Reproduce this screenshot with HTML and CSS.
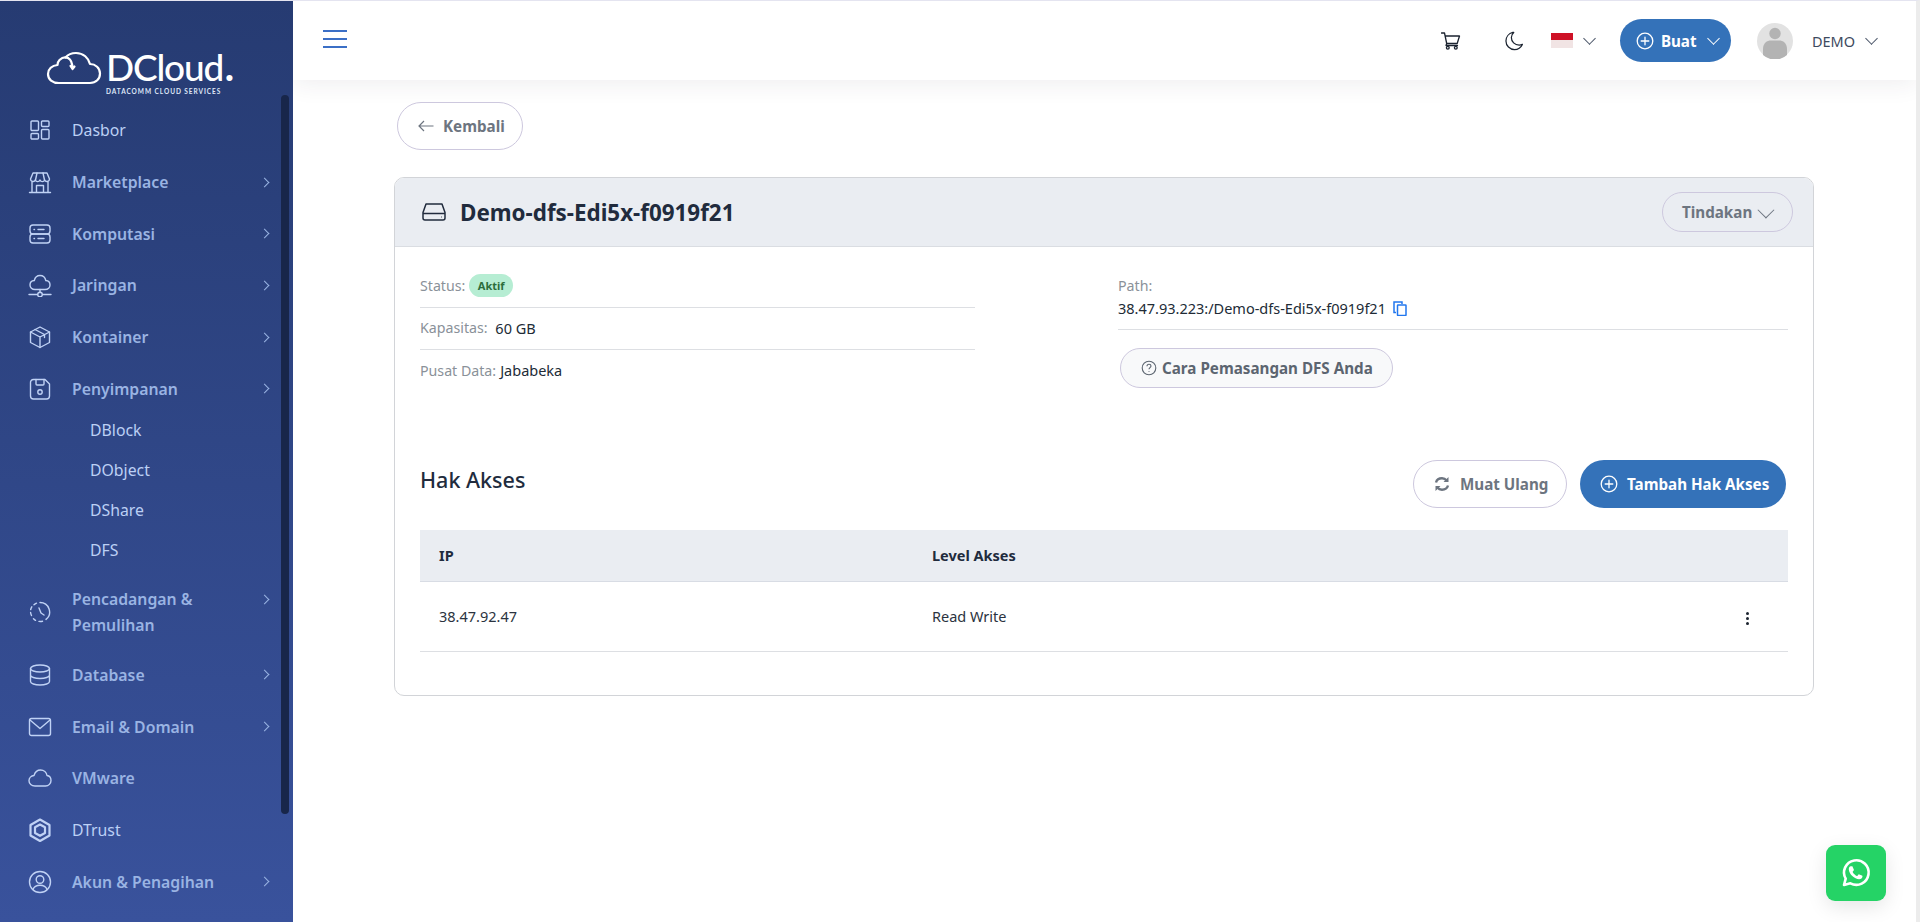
FILE: index.html
```html
<!DOCTYPE html>
<html lang="en">
<head>
    <meta charset="UTF-8">
    <title>DCloud - Demo-dfs-Edi5x-f0919f21</title>
    <link rel="stylesheet" href="styles.css">
</head>
<body>
<div class="app">
    <aside class="sidebar">
        <div class="logo">
            <svg class="logo-cloud" viewBox="0 0 56 34" fill="none" stroke="#fff" stroke-width="2.2" stroke-linecap="round" stroke-linejoin="round">
                <path d="M13 32h31c6 0 10-4 10-9.500 0-5.500-4.500-9.500-10-9.500-1.500-6-6.500-11-14-11-4.500 0-8 1.500-10.500 4.500"/>
                <path d="M22 7c-3-1.500-6-.5-8.500 2-1.500 1.500-2 3.500-2 5C6 14.500 2 18 2 23c0 5.500 4.500 9 11 9"/>
                <path d="M22 7c3 1.500 4.500 5 4.500 11M26.500 18l-2-3M26.500 18l2-2.500"/>
            </svg>
            <div class="logo-text">
                <div class="logo-name">DCloud<span class="logo-dot">.</span></div>
                <div class="logo-sub">DATACOMM CLOUD SERVICES</div>
            </div>
        </div>

        <nav class="menu">
            <a class="menu-item plain">
                <svg class="menu-icon" viewBox="0 0 24 24"><rect x="3" y="3" width="7.500" height="9.500" rx="1"/><rect x="13.500" y="3" width="7.500" height="5.500" rx="1"/><rect x="3" y="15.500" width="7.500" height="5.500" rx="1"/><rect x="13.500" y="11.500" width="7.500" height="9.500" rx="1"/></svg>
                <span class="menu-label">Dasbor</span>
            </a>
            <a class="menu-item">
                <svg class="menu-icon" viewBox="0 0 24 24"><path d="M5 3h14l2.500 6a2.500 2.500 0 0 1-4.800 1 2.500 2.500 0 0 1-4.700 0 2.500 2.500 0 0 1-4.700 0 2.500 2.500 0 0 1-4.800-1z"/><path d="M9 3 7.500 10M15 3l1.500 7M4 12v10M20 12v10M1.500 22.500h21M8.500 22v-6.500h7V22"/></svg>
                <span class="menu-label">Marketplace</span>
                <span class="chev"></span>
            </a>
            <a class="menu-item">
                <svg class="menu-icon" viewBox="0 0 24 24"><rect x="2" y="3" width="20" height="9" rx="3"/><rect x="2" y="12" width="20" height="9" rx="3"/><path d="M6 7.500h.5M10 7.500h6M6 16.500h.5M10 16.500h6"/></svg>
                <span class="menu-label">Komputasi</span>
                <span class="chev"></span>
            </a>
            <a class="menu-item">
                <svg class="menu-icon" viewBox="0 0 24 24"><path d="M7 16.500c-3 0-5-2-5-4.500 0-2.500 2-4.300 4.300-4.500C7 4.500 9.300 2.500 12 2.500c3 0 5.200 2 5.800 5 2.500.2 4.200 2 4.200 4.500s-2 4.500-5 4.500z"/><path d="M12 16.500v3M1 21.500h8.500M14.500 21.500H23"/><circle cx="12" cy="21.500" r="2.300"/></svg>
                <span class="menu-label">Jaringan</span>
                <span class="chev"></span>
            </a>
            <a class="menu-item">
                <svg class="menu-icon" viewBox="0 0 24 24"><path d="M12 2 21.500 7v10.500L12 22.500 2.500 17.500V7z"/><path d="M2.500 7 12 12l9.500-5M12 12v10.500M7 4.500 16.500 9.500v3"/></svg>
                <span class="menu-label">Kontainer</span>
                <span class="chev"></span>
            </a>
            <a class="menu-item">
                <svg class="menu-icon" viewBox="0 0 24 24"><path d="M5.500 2.500h11.500l4.500 4.500v12a3 3 0 0 1-3 3h-13a3 3 0 0 1-3-3v-13a3 3 0 0 1 3-3.500z"/><path d="M8 2.500V7a1 1 0 0 0 1 1h6a1 1 0 0 0 1-1V2.500"/><circle cx="12" cy="15" r="2.200"/></svg>
                <span class="menu-label">Penyimpanan</span>
                <span class="chev"></span>
            </a>
            <div class="submenu">
                <a class="sub-item">DBlock</a>
                <a class="sub-item">DObject</a>
                <a class="sub-item">DShare</a>
                <a class="sub-item">DFS</a>
            </div>
            <a class="menu-item tall">
                <svg class="menu-icon" viewBox="0 0 24 24"><path d="M12 2.500a9.500 9.500 0 0 1 6 16.900M14.500 21.200a9.500 9.500 0 0 1-3.500.2M7.500 20.300a9.500 9.500 0 0 1-2-1.500M3.500 15.500a9.500 9.500 0 0 1-.9-3M2.700 9.500c.2-1 .6-1.900 1.100-2.700M6 4.800a9.500 9.500 0 0 1 2.500-1.600"/><path d="M11 8l2 5 3 2"/></svg>
                <span class="menu-label">Pencadangan &amp;<br>Pemulihan</span>
                <span class="chev"></span>
            </a>
            <a class="menu-item">
                <svg class="menu-icon" viewBox="0 0 24 24"><ellipse cx="12" cy="5.500" rx="9.500" ry="3.500"/><path d="M2.500 5.500v13c0 2 4.300 3.500 9.500 3.500s9.500-1.500 9.500-3.500v-13M2.500 12c0 2 4.300 3.500 9.500 3.500s9.500-1.500 9.500-3.500"/></svg>
                <span class="menu-label">Database</span>
                <span class="chev"></span>
            </a>
            <a class="menu-item">
                <svg class="menu-icon" viewBox="0 0 24 24"><rect x="1.500" y="3.500" width="21" height="17" rx="2"/><path d="m2 5 10 8.500L22 5"/></svg>
                <span class="menu-label">Email &amp; Domain</span>
                <span class="chev"></span>
            </a>
            <a class="menu-item">
                <svg class="menu-icon" viewBox="0 0 24 24"><path d="M7 20c-3.500 0-6-2.300-6-5.300 0-2.800 2.200-5 5-5.200C7 6.300 9.500 4 12.500 4c3.400 0 6 2.400 6.500 5.500 2.400.3 4 2.400 4 5 0 3-2.300 5.500-5.500 5.500z"/></svg>
                <span class="menu-label">VMware</span>
            </a>
            <a class="menu-item plain">
                <svg class="menu-icon thick" viewBox="0 0 24 24"><path d="M12 1.500 21.500 7v10.500L12 23 2.500 17.500V7z"/><path d="M12 6.500l5 2.800v5.700l-5 2.800-5-2.800V9.300z"/></svg>
                <span class="menu-label">DTrust</span>
            </a>
            <a class="menu-item">
                <svg class="menu-icon" viewBox="0 0 24 24"><circle cx="12" cy="12" r="10.500"/><circle cx="12" cy="9.500" r="3.800"/><path d="M5 19.500c1-3 3.500-4.200 7-4.200s6 1.200 7 4.200"/></svg>
                <span class="menu-label">Akun &amp; Penagihan</span>
                <span class="chev"></span>
            </a>
        </nav>
        <div class="side-thumb"></div>
    </aside>

    <div class="main">
        <header class="topbar">
            <svg class="burger" viewBox="0 0 24 18"><path d="M0 1h24M0 9h24M0 17h24"/></svg>
            <div class="top-right">
                <svg class="top-icon cart" viewBox="0 0 20 18"><path d="M.5 1h3l2.200 10.500h10.500L18.500 4H4.300"/><path d="M5.700 11.500 5 13.500h11.500"/><circle cx="6.800" cy="15.800" r="1.400"/><circle cx="14.800" cy="15.800" r="1.400"/></svg>
                <svg class="top-icon moon" viewBox="0 0 20 20"><path d="M8.200 1C4 2 1 5.600 1 10c0 5 4 9 9 9 3.700 0 6.800-2.200 8.300-5.400-1 .5-2.200.8-3.400.8-4.600 0-8.200-3.700-8.200-8.200 0-1.900.9-3.800 2.500-5.200z"/></svg>
                <div class="flag"></div>
                <span class="caret dark flag-caret"></span>
                <button class="btn btn-primary btn-buat">
                    <svg class="plus-icon" viewBox="0 0 18 18"><circle cx="9" cy="9" r="7.800"/><path d="M9 5.200v7.600M5.200 9h7.600"/></svg>
                    Buat
                    <span class="caret white"></span>
                </button>
                <div class="avatar">
                    <svg viewBox="0 0 36 36"><circle cx="18" cy="18" r="18" fill="#e2e2e2"/><circle cx="18" cy="10.500" r="5.700" fill="#b3b3b3"/><path d="M6 32v-6c0-6 4-8.500 8-8.500h8c4 0 8 2.500 8 8.500v6a18 18 0 0 1-24 0z" fill="#b3b3b3"/></svg>
                </div>
                <span class="user-name">DEMO</span>
                <span class="caret dark"></span>
            </div>
        </header>

        <main class="content">
            <button class="btn btn-outline back-btn">
                <svg class="arrow-left" viewBox="0 0 16 12"><path d="M15.500 6H1M6 1 1 6l5 5"/></svg>
                Kembali
            </button>

            <section class="card">
                <div class="card-head">
                    <div class="card-title">
                        <svg class="drive-icon" viewBox="0 0 24 18"><path d="M4 1h16l3 8.500V15a2 2 0 0 1-2 2H3a2 2 0 0 1-2-2V9.500z"/><path d="M1 10.500h22M19.500 14h.5"/></svg>
                        <h1>Demo-dfs-Edi5x-f0919f21</h1>
                    </div>
                    <button class="btn btn-outline action-btn">Tindakan <span class="caret grey"></span></button>
                </div>

                <div class="card-body">
                    <div class="details">
                        <div class="detail-list">
                            <div class="detail-row"><span class="muted">Status:</span> <span class="badge">Aktif</span></div>
                            <div class="detail-row"><span class="muted">Kapasitas:</span>&nbsp;60 GB</div>
                            <div class="detail-row last"><span class="muted">Pusat Data:</span> Jababeka</div>
                        </div>
                        <div class="path-col">
                            <div class="path-box">
                                <div class="muted path-label">Path:</div>
                                <div class="path-value">38.47.93.223:/Demo-dfs-Edi5x-f0919f21
                                    <svg class="copy-icon" viewBox="0 0 14 15"><path d="M3 1h-2v10.500h2"/><path d="M3 1h6v2"/><rect x="4.500" y="4" width="8.500" height="10.500" rx=".5"/></svg>
                                </div>
                            </div>
                            <button class="btn guide-btn">
                                <svg class="help-icon" viewBox="0 0 16 16"><circle cx="8" cy="8" r="6.800"/><path d="M6 6.300C6 5 7 4.300 8 4.300c1.200 0 2 .8 2 1.800 0 1.500-2 1.700-2 3.200M8 11.300v.6"/></svg>
                                Cara Pemasangan DFS Anda
                            </button>
                        </div>
                    </div>

                    <div class="section-head">
                        <h2>Hak Akses</h2>
                        <div class="section-actions">
                            <button class="btn btn-outline reload-btn">
                                <svg class="reload-icon" viewBox="0 0 16 16"><path d="M2 6.500C2.700 4 5 2.300 8 2.300c2 0 3.500.8 4.700 2.200M14 9.500c-.7 2.500-3 4.200-6 4.200-2 0-3.500-.8-4.700-2.200"/><path class="fill" d="M14.500 1v5h-5zM1.500 15v-5h5z"/></svg>
                                Muat Ulang
                            </button>
                            <button class="btn btn-primary add-btn">
                                <svg class="plus-icon" viewBox="0 0 18 18"><circle cx="9" cy="9" r="7.800"/><path d="M9 5.200v7.600M5.200 9h7.600"/></svg>
                                Tambah Hak Akses
                            </button>
                        </div>
                    </div>

                    <table class="access-table">
                        <thead>
                            <tr><th class="col-ip">IP</th><th>Level Akses</th><th class="col-menu"></th></tr>
                        </thead>
                        <tbody>
                            <tr>
                                <td>38.47.92.47</td>
                                <td>Read Write</td>
                                <td class="col-menu"><span class="dots"><i></i><i></i><i></i></span></td>
                            </tr>
                        </tbody>
                    </table>
                </div>
            </section>
        </main>
    </div>
</div>

<a class="wa-btn">
    <svg viewBox="0 0 32 32"><path fill="none" stroke="#fff" stroke-width="2.600" stroke-linejoin="round" d="M4 28l1.700-6.300A12.300 12.300 0 1 1 10.400 26.300z"/><path fill="#fff" d="M11.700 9.300c.4 0 .8 0 1 .6l1.100 2.700c.1.300.1.500-.1.800l-.9 1.100c-.2.200-.2.500 0 .8.900 1.600 2.200 2.800 3.900 3.600.3.100.6.100.8-.1l1-1.200c.3-.3.500-.3.800-.2l2.600 1.200c.4.200.6.400.6.700 0 1.800-1.600 3-3.400 3-4.600-.2-9.900-5-10.300-9.800-.1-1.500.7-3.100 2-3.200z"/></svg>
</a>
</body>
</html>
```
FILE: styles.css
```css
* {
    box-sizing: border-box;
}

body {
    margin: 0;
    height: 922px;
    overflow: hidden;
    font-family: "Noto Sans", Arial, sans-serif;
    font-size: 14.500px;
    color: #212b36;
    background: #fff;
    border-top: 1px solid #e4e4f0;
    border-right: 4px solid #ececec;
}

.app {
    display: flex;
    height: 921px;
}

/* sidebar */
.sidebar {
    position: relative;
    flex: 0 0 293px;
    background: linear-gradient(180deg, #263b72 0%, #39529c 100%);
    overflow: hidden;
}

.logo {
    height: 103.500px;
    padding: 50px 0 0 46px;
    display: flex;
    gap: 4px;
    align-items: flex-start;
}

.logo-cloud {
    width: 56px;
    height: 34px;
    flex: none;
}

.logo-text {
    color: #fff;
    margin-top: -3px;
}

.logo-name {
    font-family: Lato, sans-serif;
    font-size: 37px;
    line-height: 38px;
    letter-spacing: -1.200px;
    font-weight: 500;
}

.logo-dot {
    font-weight: 900;
    margin-left: 2px;
}

.logo-sub {
    font-family: Lato, sans-serif;
    font-size: 6.500px;
    font-weight: 700;
    letter-spacing: .95px;
    line-height: 9px;
    margin-top: 1px;
    white-space: nowrap;
    color: #dfe6f7;
}

.menu-item {
    display: flex;
    align-items: center;
    height: 51.700px;
    padding: 0 0 0 28px;
    color: #9ab4e3;
    font-size: 15.800px;
    font-weight: 600;
    line-height: 26px;
}

.menu-item.plain {
    color: #bcd0f5;
    font-weight: 400;
}

.menu-item.tall {
    height: 79.500px;
    padding-top: 5px;
}

.menu-item.tall .chev {
    margin-top: -24px;
}

.menu-icon {
    width: 24px;
    height: 24px;
    flex: none;
    fill: none;
    stroke: #c0d2f5;
    stroke-width: 1.400;
    stroke-linejoin: round;
    stroke-linecap: round;
}

.menu-icon.thick {
    stroke-width: 2.200;
}

.menu-label {
    margin-left: 20px;
    flex: 1;
}

.chev {
    width: 7px;
    height: 7px;
    margin-right: 25px;
    border-top: 1.500px solid #9ab4e3;
    border-right: 1.500px solid #9ab4e3;
    transform: rotate(45deg);
}

.submenu {
    margin-top: -5px;
}

.sub-item {
    display: block;
    height: 40px;
    line-height: 40px;
    padding-left: 90px;
    font-size: 15.800px;
    color: #bcd0f5;
}

.side-thumb {
    position: absolute;
    left: 281px;
    top: 94px;
    width: 8px;
    height: 719px;
    border-radius: 4px;
    background: #18264a;
}

/* top bar */
.main {
    flex: 1;
    min-width: 0;
    display: flex;
    flex-direction: column;
}

.topbar {
    flex: 0 0 79px;
    display: flex;
    align-items: center;
    justify-content: space-between;
    padding: 0 40px 0 30px;
    background: #fff;
    box-shadow: 0 4px 22px rgba(47, 43, 61, .08);
}

.burger {
    width: 24px;
    height: 18px;
    margin-top: -4px;
    fill: none;
    stroke: #3b6fc6;
    stroke-width: 1.800;
}

.top-right {
    display: flex;
    align-items: center;
}

.top-icon {
    fill: none;
    stroke: #1b2330;
    stroke-width: 1.300;
    stroke-linejoin: round;
    stroke-linecap: round;
}

.cart {
    width: 20px;
    height: 18px;
    margin-right: 44px;
}

.moon {
    width: 19px;
    height: 20px;
    margin-right: 27px;
}

.flag {
    width: 22px;
    height: 15px;
    background: linear-gradient(180deg, #ce1126 50%, #f1e4e4 50%);
}

.caret {
    display: inline-block;
    width: 9px;
    height: 9px;
    border-right: 1.200px solid #4a5568;
    border-bottom: 1.200px solid #4a5568;
    transform: rotate(45deg);
    margin-top: -5px;
}

.caret.white {
    border-color: #fff;
    margin-left: 12px;
}

.caret.grey {
    border-color: #6d7580;
    width: 12px;
    height: 12px;
    margin-left: 8px;
}

.flag-caret {
    margin: -5px 26px 0 12px;
}

.btn {
    display: inline-flex;
    align-items: center;
    height: 48px;
    padding: 0 20px;
    border-radius: 24px;
    font-family: inherit;
    font-size: 15.200px;
    font-weight: 700;
    white-space: nowrap;
}

.btn svg {
    flex: none;
}

.btn-primary {
    background: #3472b9;
    border: 0;
    color: #fff;
}

.btn-outline {
    background: #fff;
    border: 1px solid #cdc8de;
    color: #6d7580;
}

.btn-buat {
    width: 111px;
    height: 43px;
    padding: 0 0 0 16px;
    margin-right: 26px;
    gap: 0;
}

.btn-buat .plus-icon {
    margin-right: 7px;
}

.plus-icon {
    width: 18px;
    height: 18px;
    margin-right: 9px;
    fill: none;
    stroke: #fff;
    stroke-width: 1.300;
    stroke-linecap: round;
}

.avatar {
    width: 36px;
    height: 36px;
}

.avatar svg {
    display: block;
}

.user-name {
    margin: 0 12px 0 19px;
    color: #3e4a5e;
}

/* content */
.content {
    flex: 1;
    padding: 22px 102px 0 101px;
    display: flex;
    flex-direction: column;
    align-items: flex-start;
}

.back-btn {
    margin-left: 3px;
    width: 126px;
    padding-left: 20px;
}

.arrow-left {
    width: 16px;
    height: 12px;
    margin-right: 9px;
    fill: none;
    stroke: #6d7580;
    stroke-width: 1.200;
}

.card {
    margin-top: 27px;
    width: 100%;
    height: 519px;
    border: 1px solid #d2d4d8;
    border-radius: 10px;
    overflow: hidden;
}

.card-head {
    height: 69px;
    padding: 0 20px 0 27px;
    display: flex;
    align-items: center;
    justify-content: space-between;
    background: #eaedf2;
    border-bottom: 1px solid #dadde2;
}

.card-title {
    display: flex;
    align-items: center;
    gap: 14px;
}

.card-title h1 {
    margin: 0;
    font-size: 22.400px;
    font-weight: 700;
    color: #212b3d;
}

.drive-icon {
    width: 24px;
    height: 18px;
    fill: none;
    stroke: #212b3d;
    stroke-width: 1.500;
    stroke-linejoin: round;
}

.action-btn {
    height: 40px;
    width: 131px;
    padding-left: 19px;
    background: transparent;
}

.card-body {
    padding: 19px 25px 0;
}

.details {
    display: grid;
    grid-template-columns: 555px 670px;
    gap: 143px;
    height: 153px;
}

.muted {
    color: #8a9199;
    font-size: 14.200px;
}

.detail-row {
    height: 42px;
    padding-bottom: 2px;
    display: flex;
    align-items: center;
    gap: 4px;
    border-bottom: 1px solid #dddfe3;
}

.detail-row.last {
    border-bottom: 0;
}

.badge {
    display: inline-block;
    padding: 0 8.500px;
    height: 23px;
    line-height: 24px;
    border-radius: 12px;
    background: #b6edd3;
    color: #2c6d3c;
    font-size: 11px;
    font-weight: 700;
}

.path-box {
    height: 64px;
    padding-top: 8px;
    line-height: 24px;
    border-bottom: 1px solid #dddfe3;
}

.path-label {
    margin-bottom: -2px;
}

.path-value {
    display: flex;
    align-items: center;
    gap: 7px;
}

.copy-icon {
    width: 14px;
    height: 15px;
    fill: none;
    stroke: #2277ee;
    stroke-width: 1.500;
}

.guide-btn {
    margin: 18px 0 0 2px;
    width: 273px;
    height: 40px;
    padding: 0 0 0 20px;
    background: #f8f9fa;
    border: 1px solid #cdc8de;
    color: #5c6570;
}

.help-icon {
    width: 16px;
    height: 16px;
    margin-right: 5px;
    fill: none;
    stroke: #5c6570;
    stroke-width: 1.100;
}

.section-head {
    display: flex;
    align-items: center;
    justify-content: space-between;
    margin-top: 41px;
    padding-right: 2px;
}

.section-head h2 {
    margin: 0 0 10px;
    font-size: 21.500px;
    font-weight: 500;
    color: #212b3d;
}

.section-actions {
    display: flex;
    gap: 13px;
}

.reload-btn {
    width: 154px;
    padding-left: 20px;
}

.reload-icon {
    width: 16px;
    height: 16px;
    margin-right: 10px;
    fill: none;
    stroke: #6d7580;
    stroke-width: 2.400;
}

.reload-icon .fill {
    fill: #6d7580;
    stroke: none;
}

.add-btn {
    width: 206px;
    padding-left: 20px;
}

.access-table {
    width: 100%;
    margin-top: 22px;
    border-collapse: collapse;
}

.access-table th,
.access-table td {
    text-align: left;
    padding: 0 0 0 19px;
}

.access-table th {
    height: 51px;
    background: #eaedf2;
    border-bottom: 1px solid #d8dce4;
    font-weight: 700;
    color: #212b3d;
}

.access-table td {
    height: 70px;
    border-bottom: 1px solid #dddfe3;
    color: #2b3340;
}

.col-ip {
    width: 493px;
}

.access-table .col-menu {
    width: 80px;
    padding: 0 0 0 38px;
}

.dots {
    display: inline-flex;
    flex-direction: column;
    gap: 2px;
    vertical-align: middle;
}

.dots i {
    width: 3px;
    height: 3px;
    border-radius: 50%;
    background: #1c2430;
}

.wa-btn {
    position: fixed;
    left: 1826px;
    top: 845px;
    width: 60px;
    height: 56px;
    border-radius: 9px;
    background: #25d366;
    box-shadow: 0 6px 20px rgba(0, 0, 0, .1);
    display: flex;
    align-items: center;
    justify-content: center;
}

.wa-btn svg {
    width: 32px;
    height: 32px;
}
```
